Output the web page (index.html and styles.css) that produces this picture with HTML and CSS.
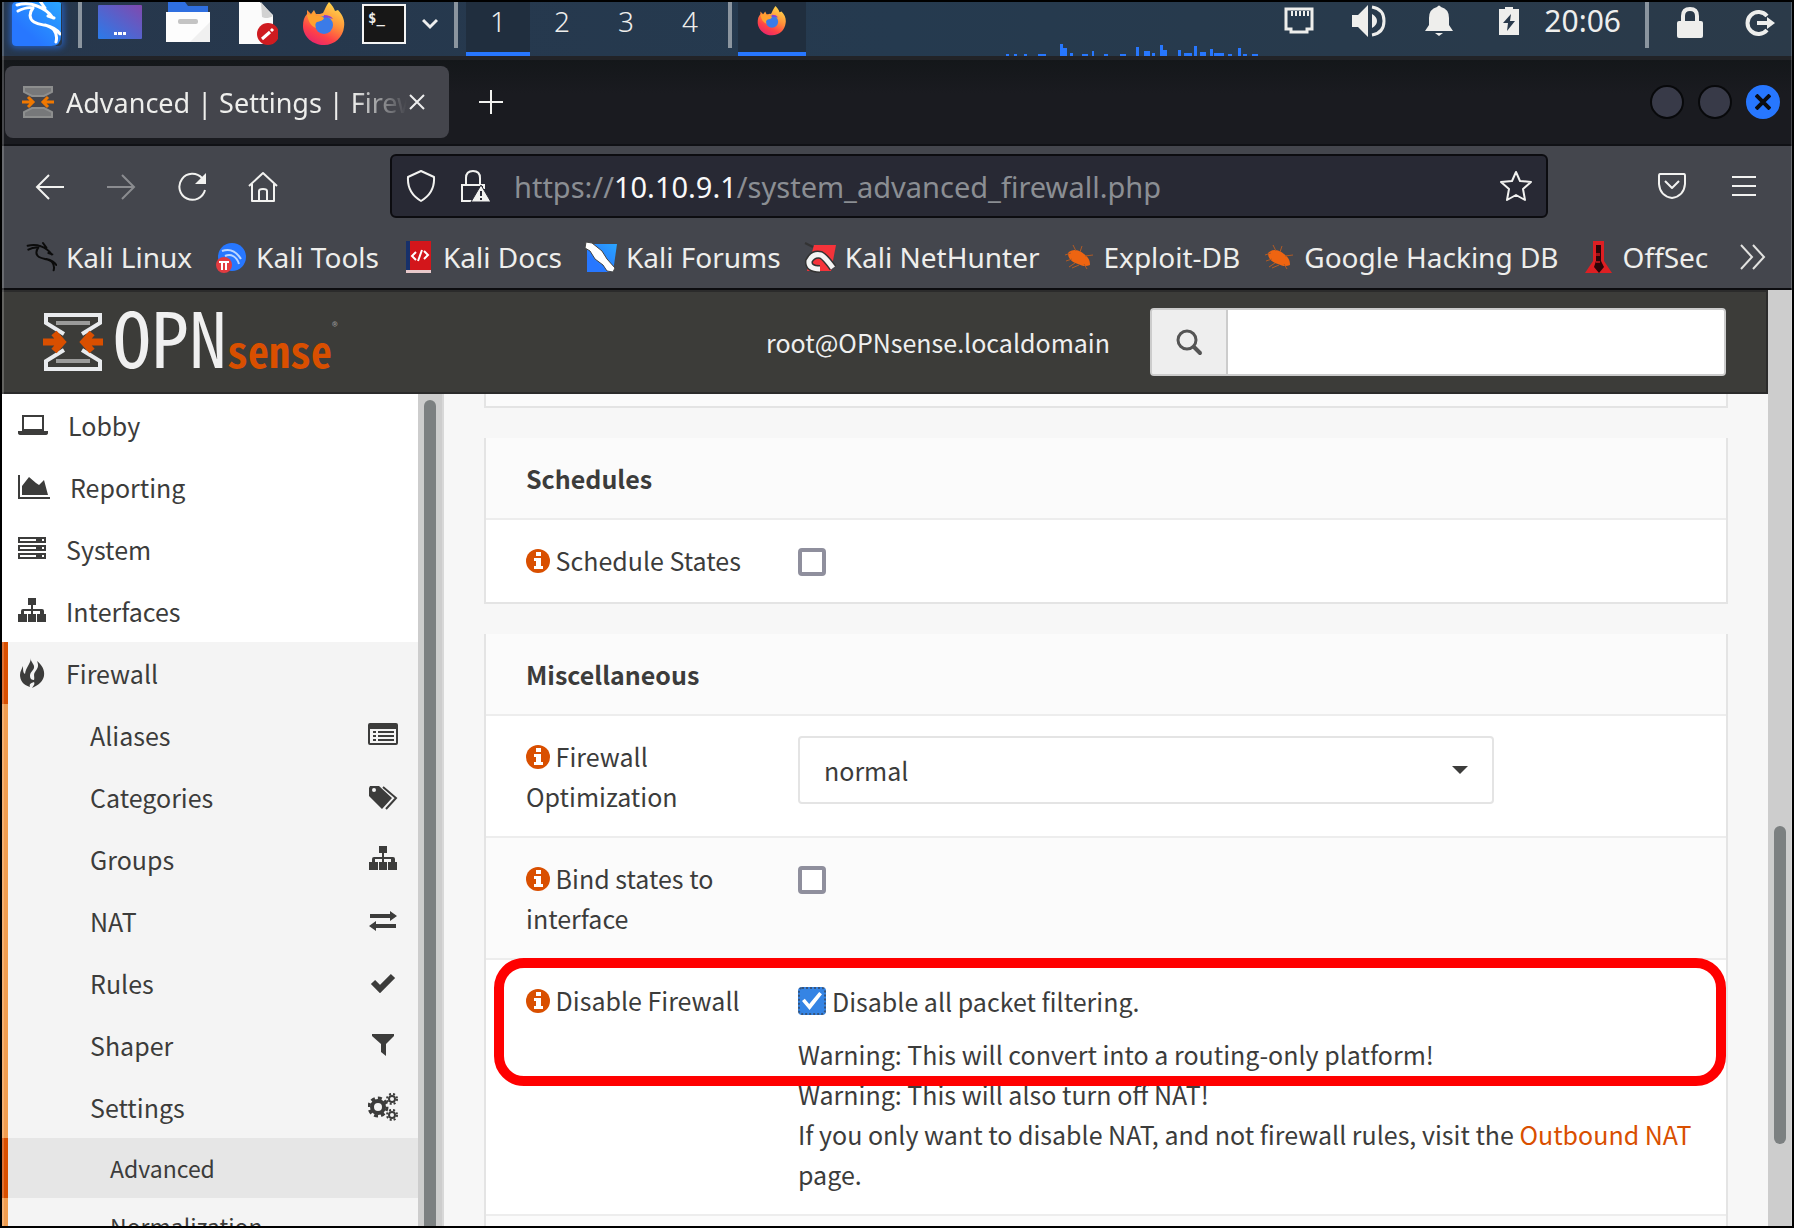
FILE: index.html
```html
<!DOCTYPE html>
<html lang="en">
<head>
<meta charset="utf-8">
<title>Advanced | Settings | Firewall | OPNsense.localdomain</title>
<link rel="stylesheet" href="styles.css">
</head>
<body>
<svg class="defs" width="0" height="0" aria-hidden="true">
  <defs>
    <linearGradient id="g-blue" x1="0" y1="1" x2="1" y2="0"><stop offset=".3" stop-color="#2777ff"/><stop offset="1" stop-color="#2aa6ff"/></linearGradient>
    <linearGradient id="g-desk" x1="0" y1="1" x2="1" y2="0"><stop offset="0" stop-color="#2a7bea"/><stop offset="1" stop-color="#8149ae"/></linearGradient>
    <linearGradient id="g-fox" x1=".8" y1="0" x2=".3" y2="1"><stop offset="0" stop-color="#ffdf4f"/><stop offset=".45" stop-color="#ff9138"/><stop offset=".75" stop-color="#ff4247"/><stop offset="1" stop-color="#e8256c"/></linearGradient>
  </defs>
  <symbol id="firefox" viewBox="0 0 44 44">
    <path fill="url(#g-fox)" d="M27 0c3 3 5 6 6 9l3-1c5 5 7 11 6 17-1 10-9 18-20 18S1 35 1 24c0-5 1-9 4-12V8l4 4 3-4 2 4c3 0 5 0 7-1 2-4 3-7 6-11z"/>
    <circle cx="22" cy="23" r="9" fill="#3b7be8"/>
    <path fill="#ffa130" d="M5 12l4 1 3-3 2 4c3 0 6 0 8 2-1 3-4 3-7 4-2 1-2 4-1 6-6-2-8-8-9-14z"/>
    <path fill="#8a3fd0" d="M22 13c4 0 7 1 9 4-3-1-6-2-9-1z"/>
  </symbol>
  <symbol id="dragon" viewBox="0 0 48 44">
    <path fill="none" stroke="currentColor" stroke-width="3" stroke-linecap="round" stroke-linejoin="round" d="M4 5c8-2 15-1 20 1M5 11c6-3 11-4 15-3M24 6c6 2 11 5 16 12M27 1l5 7M35 16l6 2M20 8c-4 5-4 11 1 14 7 4 15 2 20 8 3 4 3 8 2 12M32 25c8 2 12 4 15 9"/>
  </symbol>
  <symbol id="opn" viewBox="0 0 60 62">
    <g fill="none" stroke-width="4">
      <path stroke="#9b9b9a" d="M13 12H47M13 50H47"/>
      <path stroke="#e9ebee" d="M21 23L3 12V4H57V12L39 23M21 39L3 50V58H57V50L39 39"/>
      <path class="opn-arrow" stroke-width="7" d="M0 31H18M11 22L19 31L11 40M60 31H42M49 22L41 31L49 40"/>
    </g>
  </symbol>
  <symbol id="opn-small" viewBox="0 0 32 34">
    <g fill="none" stroke="#8d8e8e" stroke-width="2">
      <path fill="#77787a" d="M2 2H30V7L22 11H10L2 7zM2 32H30V27L22 23H10L2 27z"/>
      <path stroke="#f07800" stroke-width="3" d="M0 17H10M6 12L11 17L6 22M32 17H22M26 12L21 17L26 22"/>
    </g>
  </symbol>
  <symbol id="sitemap" viewBox="0 0 28 26">
    <path fill="currentColor" d="M10 0h8v7h-3v4h9q2 0 2 2v3h2v8h-9v-8h3v-3h-7v3h3v8h-8v-8h3v-3H6v3h3v8H0v-8h3v-3q0-2 2-2h8V7h-3z"/>
  </symbol>
  <symbol id="bug" viewBox="0 0 32 30">
    <path fill="#ee6411" d="M5 11c5-5 11-3 16 1 4 3 6 6 6 11-4 2-8 1-12-1C9 20 5 17 5 11z"/>
    <path fill="none" stroke="#b05a25" d="M8 11L2 13M9 17l-6 2M12 21l-6 4M16 23l-7 3M13 9l-3-6M17 10l2-6M22 14l8-1M21 22l3 5"/>
  </symbol>
  <symbol id="info" viewBox="0 0 24 24">
    <circle cx="12" cy="12" r="12" fill="#d94f00"/>
    <path fill="#fff" d="M10 3h5v4h-5zM8 9h7v8h2v3H8v-3h2v-5H8z"/>
  </symbol>
</svg>

<div class="desktop">
  <header class="taskbar">
    <div class="taskbar-left">
      <button class="plain" aria-label="Applications"><svg class="kali" width="50" height="44" viewBox="0 0 50 44"><path fill="url(#g-blue)" d="M0 0h49v34q0 10-10 10H0z"/><use href="#dragon" x="1" y="-2" width="48" height="44"/></svg></button>
      <span class="sep"></span>
      <div class="launchers">
        <button class="plain" aria-label="Show desktop"><svg width="44" height="44" viewBox="0 0 44 44"><rect y="3" width="44" height="34" rx="1" fill="url(#g-desk)"/><path fill="#fff" d="M16 30h3v3h-3zM20 30h4v3h-4zM25 30h3v3h-3z"/></svg></button>
        <button class="plain" aria-label="Files"><svg width="44" height="44" viewBox="0 0 44 44"><path fill="#2f6fe0" d="M2 0h17l3 4h20v10H2z"/><path fill="#fdfdfd" d="M0 10h44v30H0z"/><path fill="#f0f0f0" d="M44 20v20H24z"/><rect x="12" y="17" width="20" height="5" rx="2" fill="#c4c4c4"/></svg></button>
        <button class="plain" aria-label="Text editor"><svg width="44" height="44" viewBox="0 0 44 44"><path fill="#fbfbfb" d="M5 0h21l13 13v29H5z"/><path fill="#d2d2d2" d="M27 0l12 14c-5 3-9 2-11 1z"/><circle cx="34" cy="32" r="11" fill="#cf1b20"/><path stroke="#fff" stroke-width="3" d="M28 37l8-7M37 29l2-2"/></svg></button>
        <button class="plain" aria-label="Firefox"><svg width="44" height="44"><use href="#firefox"/></svg></button>
      </div>
      <button class="plain" aria-label="Terminal"><span class="term">$_</span></button>
      <button class="plain" aria-label="More launchers"><svg width="16" height="12" viewBox="0 0 16 12"><path fill="none" stroke="#eee" stroke-width="3" d="M1 2l7 7 7-7"/></svg></button>
      <span class="sep"></span>
    </div>
    <nav class="workspaces" aria-label="Workspaces">
      <button class="ws active">1</button><button class="ws">2</button><button class="ws">3</button><button class="ws">4</button>
    </nav>
    <span class="sep sep-task"></span>
    <button class="ws active" aria-label="Firefox window"><svg width="30" height="30"><use href="#firefox"/></svg></button>
    <svg class="graph" width="252" height="14" viewBox="0 0 252 14"><path fill="#2777ff" d="M0 12h3v2H0zM8 12h3v2H8zM18 12h3v2h-3zM32 12h8v2h-8zM54 2h3v12h-3zM57 6h4v8h-4zM64 11h3v3h-3zM76 12h6v2h-6zM86 9h2v5h-2zM98 12h4v2h-4zM114 12h6v2h-6zM130 5h3v9h-3zM138 9h6v5h-6zM146 11h3v3h-3zM154 3h3v11h-3zM157 8h4v6h-4zM172 8h3v6h-3zM178 11h8v3h-8zM188 4h3v10h-3zM194 10h6v4h-6zM204 7h3v7h-3zM208 11h10v3h-10zM222 12h4v2h-4zM232 6h3v8h-3zM237 12h4v2h-4zM246 12h6v2h-6z"/></svg>
    <div class="tray">
      <button class="plain tray-item" aria-label="Network"><svg width="30" height="28" viewBox="0 0 30 28"><path fill="none" stroke="#eeeeec" stroke-width="3" d="M2 2h26v20h-5v3H7v-3H2z"/><path stroke="#eeeeec" stroke-width="2" d="M8 4v5M12 4v5M16 4v5M20 4v5M24 4v5"/></svg></button>
      <button class="plain tray-item" aria-label="Volume"><svg width="34" height="32" viewBox="0 0 34 32"><path fill="#eeeeec" d="M0 10h6L16 0v32L6 22H0zM20 9q5 3 5 7t-5 7z"/><path fill="none" stroke="#eeeeec" stroke-width="3" d="M20 2q12 2 12 14T20 30"/></svg></button>
      <button class="plain tray-item" aria-label="Notifications"><svg width="28" height="32" viewBox="0 0 28 32"><path fill="#eeeeec" d="M12 2q2-3 4 0 8 2 8 11v7l4 6H0l4-6v-7Q4 4 12 2zM10 28h8l-4 3z"/></svg></button>
      <button class="plain tray-item" aria-label="Battery"><svg width="20" height="28" viewBox="0 0 20 28"><path fill="#eeeeec" d="M6 0h8v2h6v26H0V2h6z"/><path fill="#28394b" d="M12 7l-8 9h5l-1 8 8-10h-5z"/></svg></button>
    </div>
    <time class="clock">20:06</time>
    <span class="sep sep-clock"></span>
    <div class="session">
      <button class="plain" aria-label="Lock"><svg width="26" height="32" viewBox="0 0 26 32"><path fill="none" stroke="#eeeeec" stroke-width="4" d="M6 16V9q0-7 7-7t7 7v7"/><rect y="14" width="26" height="17" rx="2" fill="#eeeeec"/></svg></button>
      <button class="plain" aria-label="Log out"><svg width="30" height="28" viewBox="0 0 30 28"><path fill="none" stroke="#eeeeec" stroke-width="4" d="M22 7A11 11 0 1 0 22 21"/><path fill="#eeeeec" d="M12 12h10V8l8 6-8 6v-4H12z"/></svg></button>
    </div>
  </header>

  <div class="tabs">
    <div class="tab">
      <svg width="32" height="34"><use href="#opn-small"/></svg>
      <span class="tab-title">Advanced | Settings | Firewall</span>
      <button class="plain" aria-label="Close tab"><svg width="16" height="16" viewBox="0 0 16 16"><path stroke="#eee" stroke-width="2" d="M1 1l14 14M15 1L1 15"/></svg></button>
    </div>
    <button class="plain newtab" aria-label="New tab"><svg width="24" height="24" viewBox="0 0 24 24"><path stroke="#f2f2f0" stroke-width="2" d="M12 0v24M0 12h24"/></svg></button>
    <div class="win-buttons">
      <button class="dot" aria-label="Minimize"></button>
      <button class="dot" aria-label="Maximize"></button>
      <button class="dot close" aria-label="Close"><svg width="16" height="16" viewBox="0 0 16 16"><path stroke="#0b0d12" stroke-width="4" d="M1 1l14 14M15 1L1 15"/></svg></button>
    </div>
  </div>

  <div class="toolbar">
    <div class="navbar">
      <div class="nav-buttons">
        <button class="plain" aria-label="Back"><svg width="30" height="32" viewBox="0 0 30 32"><path fill="none" stroke="#f2f2f0" stroke-width="2" d="M29 17H2M14 5L2 17l12 12"/></svg></button>
        <button class="plain" aria-label="Forward" disabled><svg width="30" height="32" viewBox="0 0 30 32"><path fill="none" stroke="#8b8c90" stroke-width="2" d="M1 17h27M16 5l12 12-12 12"/></svg></button>
        <button class="plain" aria-label="Reload"><svg width="30" height="32" viewBox="0 0 30 32"><path fill="none" stroke="#f2f2f0" stroke-width="2" d="M25 8A13 13 0 1 0 28 20"/><path fill="#f2f2f0" d="M29 3v11H18z"/></svg></button>
        <button class="plain" aria-label="Home"><svg width="30" height="32" viewBox="0 0 30 32"><path fill="none" stroke="#f2f2f0" stroke-width="2" stroke-linejoin="round" d="M1 16L15 3l14 13M4 14v17h22V14M11 31V21q0-2 4-2t4 2v10"/></svg></button>
      </div>
      <div class="urlbar">
        <svg width="30" height="34" viewBox="0 0 30 34"><path fill="none" stroke="#f2f2f0" stroke-width="2" stroke-linejoin="round" d="M15 2l13 6q1 16-13 24Q1 24 2 8z"/></svg>
        <svg width="30" height="34" viewBox="0 0 30 34"><path fill="none" stroke="#f2f2f0" stroke-width="2" d="M6 16V9q0-7 7-7t7 7v7M13 32H2V16h22v4"/><path fill="#f2f2f0" stroke="#282934" d="M21 16l10 17H11z"/><path stroke="#282934" stroke-width="2" d="M21 22v5M21 29v2"/></svg>
        <div class="url" role="textbox" aria-label="Address">https://<b>10.10.9.1</b>/system_advanced_firewall.php</div>
        <button class="plain" aria-label="Bookmark page"><svg width="32" height="32" viewBox="0 0 32 32"><path fill="none" stroke="#f2f2f0" stroke-width="2" stroke-linejoin="round" d="M16 2l4 9 11 1-8 7 2 11-9-5-9 5 2-11-8-7 11-1z"/></svg></button>
      </div>
      <div class="nav-end">
        <button class="plain" aria-label="Pocket"><svg width="28" height="26" viewBox="0 0 28 26"><path fill="none" stroke="#f2f2f0" stroke-width="2" stroke-linejoin="round" d="M2 1h24q1 0 1 2v8Q26 23 14 25 2 23 1 11V3q0-2 1-2zM7 8l7 7 7-7"/></svg></button>
        <button class="plain" aria-label="Menu"><svg width="24" height="20" viewBox="0 0 24 20"><path stroke="#f2f2f0" stroke-width="2" d="M0 1h24M0 10h24M0 19h24"/></svg></button>
      </div>
    </div>
    <nav class="bookmarks" aria-label="Bookmarks">
      <a href="#"><svg class="black" width="32" height="32"><use href="#dragon"/></svg>Kali Linux</a>
      <a href="#"><svg width="32" height="32" viewBox="0 0 32 32"><circle cx="17" cy="16" r="14" fill="#2777ff"/><path fill="none" stroke="#bcd6ff" stroke-width="2" d="M7 10c8-3 14 0 19 8M10 15c6-3 12 1 14 8"/><circle cx="9" cy="24" r="8" fill="#e23b40"/><path stroke="#fff" stroke-width="2" d="M4 21h10M7 21v8M11 21v8"/></svg>Kali Tools</a>
      <a href="#"><svg width="32" height="32" viewBox="0 0 32 32"><path fill="#17306a" d="M4 0h5v30H4z"/><path fill="#d3161b" d="M8 0h21v29H8z"/><path fill="#e8c9cb" d="M4 29h25v3H4z"/><path fill="none" stroke="#fff" stroke-width="2" d="M14 11l-4 4 4 4M22 10l4 4-4 4M20 9l-4 11"/></svg>Kali Docs</a>
      <a href="#"><svg width="32" height="32" viewBox="0 0 32 32"><path fill="url(#g-blue)" d="M2 3h30L28 31H2z"/><path fill="#fff" stroke="#444" d="M1 1l6 1 10 8 5 8 8 9-2 4-6-1-4-6-8-6-5-8-5-3z"/></svg>Kali Forums</a>
      <a href="#"><svg width="32" height="32" viewBox="0 0 32 32"><path fill="#f5333a" d="M10 4h22l-5 26H3z"/><path fill="none" stroke="#333" stroke-width="8" d="M16 28Q4 28 5 20q4-8 12-6 4 2 12 13"/><path fill="none" stroke="#f4f4f4" stroke-width="5" d="M16 28Q4 28 5 20q4-8 12-6 4 2 12 13"/><path stroke="#333" stroke-width="2" d="M1 2l8 4"/></svg>Kali NetHunter</a>
      <a href="#"><svg width="32" height="30"><use href="#bug"/></svg>Exploit-DB</a>
      <a href="#"><svg width="32" height="30"><use href="#bug"/></svg>Google Hacking DB</a>
      <a href="#"><svg width="32" height="32" viewBox="0 0 32 32"><path fill="#dd1f23" d="M11 0h11v20l8 12H3l8-12z"/><path fill="#2b0508" d="M14 4h5v16l3 6-5 6-5-6 2-6z"/><path fill="#a01216" d="M14 12h4v3h-4zM14 20h4v2h-4z"/></svg>OffSec</a>
      <button class="plain more" aria-label="More bookmarks"><svg width="26" height="26" viewBox="0 0 26 26"><path fill="none" stroke="#e2e2e0" stroke-width="2" d="M1 1l11 12L1 25M13 1l11 12-11 12"/></svg></button>
    </nav>
  </div>

  <div class="viewport">
    <div class="page">
      <header class="page-head">
        <a class="brand" href="#" aria-label="OPNsense"><svg width="60" height="62"><use href="#opn"/></svg><span class="brand-opn">OPN</span><span class="brand-sense">sense</span><span class="brand-reg">®</span></a>
        <span class="user">root@OPNsense.localdomain</span>
        <form class="search">
          <label class="search-label" for="q" aria-label="Search"><svg width="28" height="28" viewBox="0 0 28 28"><circle cx="12" cy="12" r="9" fill="none" stroke="#555" stroke-width="3"/><path stroke="#555" stroke-width="4" stroke-linecap="round" d="M19 19l6 6"/></svg></label>
          <input id="q" type="text">
        </form>
      </header>
      <div class="page-body">
        <nav class="sidebar" aria-label="Main">
          <a href="#"><svg width="30" height="20" viewBox="0 0 30 20"><path fill="none" stroke="currentColor" stroke-width="2" d="M5 1h20v14H5z"/><path fill="currentColor" d="M0 16h30v2q0 2-3 2H3q-3 0-3-2z"/></svg>Lobby</a>
          <a href="#"><svg width="32" height="24" viewBox="0 0 32 24"><path fill="currentColor" d="M0 0h2v22h30v2H0zM4 11l7-9 7 6 3 2 5-5 4 15H4z"/></svg>Reporting</a>
          <a href="#"><svg width="28" height="24" viewBox="0 0 28 24"><path fill="currentColor" fill-rule="evenodd" d="M0 0h28v6H0zM2 2h16v2H2zM24 2h2v2h-2zM0 8h28v6H0zM2 10h16v2H2zM24 10h2v2h-2zM0 16h28v6H0zM2 18h16v2H2zM24 18h2v2h-2z"/></svg>System</a>
          <a href="#"><svg width="28" height="26"><use href="#sitemap"/></svg>Interfaces</a>
          <a class="open" href="#"><svg width="28" height="30" viewBox="0 0 28 30"><path fill="currentColor" d="M13 0c-1 4 4 6 3 10-1 3-4 4-4 8 0 3 2 4 4 4 1-3-1-5 1-8 3-4 4-6 2-11 5 4 8 9 7 15-1 5-5 9-12 12 2-3 3-4 2-6-3 1-5 2-4 5C5 27 2 22 2 17c0-4 2-6 3-9 0 4 0 7 2 8C8 9 12 7 13 0z"/></svg>Firewall</a>
          <div class="submenu">
            <a href="#">Aliases<svg width="30" height="24" viewBox="0 0 30 24"><path fill="currentColor" fill-rule="evenodd" d="M2 0h26q2 0 2 2v18q0 2-2 2H2q-2 0-2-2V2q0-2 2-2zM2 6v14h26V6zM5 8h3v2H5zM10 8h16v2H10zM5 12h3v2H5zM10 12h16v2H10zM5 16h3v2H5zM10 16h16v2H10z"/></svg></a>
            <a href="#">Categories<svg width="30" height="26" viewBox="0 0 30 26"><path fill="currentColor" fill-rule="evenodd" d="M2 2h9l13 12-10 11L1 12V4zM4 6a2 2 0 1 0 4 0 2 2 0 1 0-4 0z"/><path fill="none" stroke="currentColor" stroke-width="2" d="M15 3l13 11-10 11"/></svg></a>
            <a href="#">Groups<svg width="30" height="26"><use href="#sitemap"/></svg></a>
            <a href="#">NAT<svg width="30" height="20" viewBox="0 0 30 20"><path fill="currentColor" d="M2 3h20V0l7 5-7 5V7H2zM28 13H8v-3l-7 5 7 5v-3h20z"/></svg></a>
            <a href="#">Rules<svg width="30" height="20" viewBox="0 0 30 20"><path fill="none" stroke="currentColor" stroke-width="6" d="M5 9l7 7L25 3"/></svg></a>
            <a href="#">Shaper<svg width="30" height="24" viewBox="0 0 30 24"><path fill="currentColor" d="M4 1h22v2l-8 8v12l-5-4v-8L4 3z"/></svg></a>
            <a href="#">Settings<svg width="30" height="28" viewBox="0 0 30 28"><g fill="none" stroke="currentColor"><circle cx="10" cy="14" r="6" stroke-width="4"/><circle cx="10" cy="14" r="9" stroke-width="3" stroke-dasharray="4 3"/><circle cx="24" cy="6" r="3" stroke-width="2"/><circle cx="24" cy="6" r="5" stroke-width="2" stroke-dasharray="2 2"/><circle cx="24" cy="22" r="3" stroke-width="2"/><circle cx="24" cy="22" r="5" stroke-width="2" stroke-dasharray="2 2"/></g></svg></a>
            <a class="leaf current" href="#">Advanced</a>
            <a class="leaf" href="#">Normalization</a>
          </div>
        </nav>
        <div class="scrollbar side-scroll"><div class="thumb"></div></div>
        <main class="content">
          <div class="panel panel-tail"></div>
          <table class="panel">
            <colgroup><col class="col-name"><col></colgroup>
            <thead><tr><th colspan="2">Schedules</th></tr></thead>
            <tbody>
              <tr><td class="name"><svg class="info" width="24" height="24"><use href="#info"/></svg> <label for="sched">Schedule States</label></td><td><input id="sched" type="checkbox"></td></tr>
            </tbody>
          </table>
          <table class="panel">
            <colgroup><col class="col-name"><col></colgroup>
            <thead><tr><th colspan="2">Miscellaneous</th></tr></thead>
            <tbody>
              <tr><td class="name"><svg class="info" width="24" height="24"><use href="#info"/></svg> <label for="opt">Firewall Optimization</label></td><td><div class="select"><select id="opt"><option>normal</option></select></div></td></tr>
              <tr class="alt"><td class="name"><svg class="info" width="24" height="24"><use href="#info"/></svg> <label for="bind">Bind states to interface</label></td><td><input id="bind" type="checkbox"></td></tr>
              <tr class="marked"><td class="name"><svg class="info" width="24" height="24"><use href="#info"/></svg> Disable Firewall</td><td>
                <label class="check"><input type="checkbox" checked>Disable all packet filtering.</label>
                <p class="help">Warning: This will convert into a routing-only platform!<br>Warning: This will also turn off NAT!<br>If you only want to disable NAT, and not firewall rules, visit the <a href="#">Outbound NAT</a> page.</p>
                <div class="highlight"></div></td></tr>
              <tr class="alt"><td class="name"></td><td></td></tr>
            </tbody>
          </table>
        </main>
      </div>
    </div>
    <div class="scrollbar page-scroll"><div class="before"></div><div class="thumb"></div><div class="after"></div></div>
  </div>
</div>
</body>
</html>
```
FILE: styles.css
```css
* { box-sizing: border-box; }

body {
  margin: 0;
  font-family: "Noto Sans", sans-serif;
  font-size: 27px;
  color: #eeeeec;
}

a { color: inherit; text-decoration: none; }
svg { display: block; flex: none; }
.defs { position: absolute; }

.plain {
  display: block;
  padding: 0;
  border: 0;
  background: none;
  color: inherit;
  font: inherit;
}

.desktop {
  position: relative;
  display: flex;
  flex-direction: column;
  height: 100vh;
  border: 2px solid #000;
  overflow: hidden;
}
.desktop::after {
  content: "";
  position: absolute;
  inset: 0;
  border: solid rgba(255, 255, 255, .2);
  border-width: 0 1px 0 2px;
  pointer-events: none;
}

/* Desktop panel */
.taskbar {
  display: flex;
  flex: none;
  height: 54px;
  background: linear-gradient(90deg, #27374c, #253a4f 50%, #2b3a49);
}
.taskbar-left { display: flex; gap: 16px; padding-left: 10px; }
.taskbar-left > .plain { align-self: flex-start; height: 44px; display: flex; align-items: center; }
.kali { color: #fff; border-radius: 4px; box-shadow: 0 0 6px 2px rgba(39, 119, 255, .6); }
.launchers { display: flex; gap: 24px; }
.launchers .plain { align-self: flex-start; }
.sep { flex: none; width: 4px; height: 46px; background: #8b959f; }
.term {
  display: block;
  width: 44px;
  height: 40px;
  padding-left: 4px;
  border: 2px solid #f4f4f4;
  background: #171717;
  font: bold 14px/24px "DejaVu Sans Mono", monospace;
  text-align: left;
}
.workspaces { display: flex; margin-left: 8px; }
.ws {
  display: flex;
  justify-content: center;
  width: 64px;
  padding: 4px 0 0;
  border: 0;
  border-bottom: 4px solid transparent;
  background: none;
  color: #eeeeec;
  font: 300 28px/30px "Noto Sans", sans-serif;
}
.ws.active { border-color: #2777ff; background: #202e3e; }
.sep-task { margin: 0 6px; }
.sep-task + .ws { width: 68px; }
.graph { margin-left: auto; margin-right: 6px; align-self: flex-end; }
.tray { display: flex; height: 38px; }
.tray-item { display: flex; align-items: center; justify-content: center; width: 70px; }
.clock { font-size: 30px; line-height: 38px; }
.sep-clock { margin-left: 24px; }
.session { display: flex; align-items: center; gap: 42px; height: 42px; padding: 0 17px 0 28px; }

/* Browser tabs */
.tabs {
  display: flex;
  flex: none;
  align-items: center;
  height: 90px;
  padding: 6px 12px 6px 3px;
  border-top: 4px solid #222327;
  border-bottom: 2px solid #101115;
  background: linear-gradient(#14171a, #1a1b20 40%);
}
.tab {
  display: flex;
  align-items: center;
  gap: 12px;
  width: 444px;
  height: 72px;
  padding: 0 24px 0 17px;
  border-radius: 8px;
  background: #44454c;
}
.tab-title {
  flex: 1;
  overflow: hidden;
  white-space: nowrap;
  margin-right: -10px;
  -webkit-mask-image: linear-gradient(90deg, #000 84%, transparent);
  mask-image: linear-gradient(90deg, #000 84%, transparent);
}
.newtab { margin-left: 30px; }
.win-buttons { display: flex; gap: 14px; margin-left: auto; }
.dot {
  display: flex;
  align-items: center;
  justify-content: center;
  width: 34px;
  height: 34px;
  padding: 0;
  border: 2px solid #08090b;
  border-radius: 50%;
  background: #383a48;
}
.dot.close { border-color: #2777ff; background: #2777ff; }

/* Browser toolbar */
.toolbar {
  flex: none;
  height: 144px;
  border-bottom: 2px solid #0c0c0f;
  background: #44464d;
}
.navbar { display: flex; align-items: center; height: 80px; }
.nav-buttons { display: flex; gap: 41px; width: 388px; padding-left: 33px; }
.urlbar {
  display: flex;
  flex: 1;
  align-items: center;
  gap: 24px;
  height: 64px;
  padding: 0 14px;
  border: 2px solid #0c0c10;
  border-radius: 6px;
  background: #282934;
}
.url { flex: 1; color: #8b8e93; font-size: 29px; white-space: nowrap; }
.url b { color: #f9f9fa; font-weight: 400; }
.nav-end { display: flex; align-items: center; justify-content: space-between; width: 244px; padding: 0 36px 0 110px; }
.bookmarks {
  display: flex;
  align-items: center;
  gap: 23px;
  height: 62px;
  padding: 0 26px 0 23px;
  font-size: 28px;
  white-space: nowrap;
}
.bookmarks a { display: flex; align-items: center; gap: 9px; }
.black { color: #0b0b0b; }
.more { margin-left: auto; }

/* Web page */
.viewport {
  display: flex;
  flex: 1;
  min-height: 0;
  font-family: "Noto Sans CJK SC", "Noto Sans", sans-serif;
  font-size: 25px;
  line-height: 40px;
}
.page { display: flex; flex: 1; flex-direction: column; min-width: 0; }
.page-head {
  display: flex;
  flex: none;
  align-items: center;
  height: 104px;
  padding: 0 40px 0 41px;
  border: solid #2b2b2b;
  border-width: 2px 2px 2px 0;
  background: #3c3c39;
  color: #efefef;
}
.brand {
  display: flex;
  align-items: baseline;
  font-family: "Noto Sans Mono CJK SC", "Liberation Sans", sans-serif;
  line-height: 62px;
}
.brand svg { align-self: center; margin-right: 10px; }
.opn-arrow { stroke: #d94f00; }
.brand-opn { font-size: 76px; color: #f0f0f0; }
.brand-sense { font-size: 42px; font-weight: 700; color: #d94f00; }
.brand-reg { font-size: 12px; line-height: 44px; color: #999; align-self: flex-start; }
.user { margin-left: auto; }
.search { display: flex; width: 576px; height: 68px; margin-left: 40px; border: 2px solid #ccc; border-radius: 4px; background: #fff; overflow: hidden; }
.search-label { display: flex; align-items: center; justify-content: center; width: 76px; border-right: 2px solid #ccc; background: #eee; }
.search input { flex: 1; min-width: 0; padding: 0 24px; border: 0; outline: 0; font: inherit; }
.page-body { display: flex; flex: 1; min-height: 0; color: #3c3c3b; }

.sidebar { flex: none; width: 416px; background: #fff; overflow: hidden; }
.sidebar a { display: flex; align-items: center; gap: 20px; height: 62px; padding-left: 16px; }
.sidebar .open { padding-left: 10px; border-left: 6px solid #d94f00; background: #f4f4f4; }
.submenu { background: #f4f4f4; }
.submenu a { justify-content: space-between; padding: 0 20px 0 82px; border-left: 6px solid #f09d50; }
.submenu .leaf { height: 56px; padding-left: 102px; font-size: 23px; }
.submenu .current { height: 60px; border-color: #d94f00; background: #e6e6e6; }

.scrollbar { flex: none; display: flex; flex-direction: column; background: #cdcdcd; }
.scrollbar .thumb { border-radius: 6px; background: #7c8081; }
.side-scroll { width: 26px; padding: 6px 6px 0; border-right: 2px solid #d8d8d8; }
.side-scroll .thumb { flex: 1; border-radius: 6px 6px 0 0; }
.page-scroll { width: 24px; padding: 0 6px; }
.page-scroll .before { flex: 536; }
.page-scroll .thumb { flex: 318; }
.page-scroll .after { flex: 82; }

.content { flex: 1; min-width: 0; padding: 0 40px; background: #f7f7f7; overflow: hidden; }
.panel {
  width: 100%;
  margin-bottom: 30px;
  border: 2px solid #e4e4e4;
  border-top: 0;
  border-collapse: separate;
  border-spacing: 0;
  background: #fff;
  table-layout: fixed;
}
.panel-tail { height: 14px; background: #fbfbfb; }
.col-name { width: 296px; }
th, td { padding: 20px 16px; border-bottom: 2px solid #ededed; text-align: left; vertical-align: top; }
th { padding-left: 40px; background: #fbfbfb; font-weight: 700; }
.name { padding-left: 40px; }
tbody tr:last-child td { border-color: transparent; }
.alt { background: #fbfbfb; }
.info { display: inline-block; vertical-align: -2px; }

input[type="checkbox"] {
  appearance: none;
  display: block;
  flex: none;
  width: 28px;
  height: 28px;
  margin: 8px 0 0;
  border: 4px solid #8f8f9d;
  border-radius: 4px;
  background: #fff;
}
input[type="checkbox"]:checked {
  margin: 0;
  border: 2px dotted #35557f;
  background: #3584e4;
}
input[type="checkbox"]:checked::before {
  content: "";
  display: block;
  width: 20px;
  height: 18px;
  margin: 3px 2px;
  background: #fff;
  clip-path: polygon(0 50%, 14% 38%, 36% 66%, 86% 0, 100% 12%, 38% 100%);
}
.check { display: flex; align-items: center; gap: 6px; height: 42px; }
.help { margin: 12px 0 0; }
.help a { color: #d94f00; }

.select { position: relative; max-width: 696px; height: 68px; }
.select select {
  appearance: none;
  width: 100%;
  height: 100%;
  padding: 0 24px;
  border: 2px solid #e4e4e4;
  border-radius: 4px;
  background: #fff;
  color: inherit;
  font: inherit;
}
.select::after {
  content: "";
  position: absolute;
  top: 30px;
  right: 26px;
  border: 8px solid transparent;
  border-top-color: #3c3c3b;
  border-bottom: 0;
}

.marked { position: relative; }
.highlight {
  position: absolute;
  top: -2px;
  left: 8px;
  right: 0;
  height: 128px;
  border: 10px solid #f00;
  border-radius: 30px;
  pointer-events: none;
}
```
